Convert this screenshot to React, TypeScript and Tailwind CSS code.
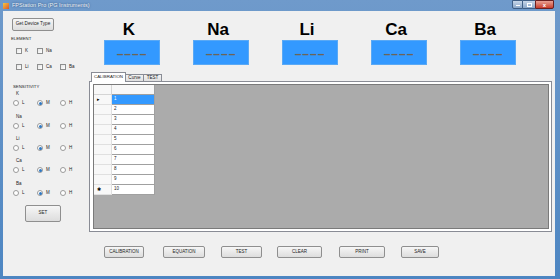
import React from "react";

const elements = ["K", "Na", "Li", "Ca", "Ba"];

const sensitivity = [
  { name: "K", mt: "mt-[1px]" },
  { name: "Na", mt: "mt-[8px]" },
  { name: "Li", mt: "mt-[7px]" },
  { name: "Ca", mt: "mt-[7px]" },
  { name: "Ba", mt: "mt-[8px]" },
];

const bottomButtons = [
  { label: "CALIBRATION", cls: "ml-[16px] w-[40px]" },
  { label: "EQUATION", cls: "ml-[19px] w-[42px]" },
  { label: "TEST", cls: "ml-[16px] w-[41px]" },
  { label: "CLEAR", cls: "ml-[15px] w-[45px]" },
  { label: "PRINT", cls: "ml-[17px] w-[46px]" },
  { label: "SAVE", cls: "ml-[16px] w-[38px]" },
];

function WinButton({ label, cls }: { label: string; cls: string }) {
  return (
    <div
      className={`${cls} flex items-center justify-center rounded-[2px] border border-[#8f8f8f] bg-gradient-to-b from-[#f6f6f6] to-[#dddddd] text-[4.5px] leading-none text-[#222]`}
    >
      {label}
    </div>
  );
}

function CheckBox({ label, w }: { label: string; w: string }) {
  return (
    <div className={`${w} flex items-center`}>
      <div className="h-[6px] w-[6px] border border-[#8e8f8f] bg-gradient-to-br from-[#e6e6e6] to-white" />
      <span className="ml-[3px] text-[4.5px] leading-none text-[#222]">{label}</span>
    </div>
  );
}

function Radio({ label, checked, w }: { label: string; checked?: boolean; w: string }) {
  return (
    <div className={`${w} flex items-center`}>
      <div className="flex h-[6px] w-[6px] items-center justify-center rounded-full border border-[#9a9a9a] bg-white">
        {checked && <div className="h-[3px] w-[3px] rounded-full bg-[#2f78c2]" />}
      </div>
      <span className="ml-[3px] text-[4.5px] leading-none text-[#222]">{label}</span>
    </div>
  );
}

export default function App() {
  const rows = [1, 2, 3, 4, 5, 6, 7, 8, 9, 10];
  return (
    <div className="flex h-[279px] w-[560px] flex-col overflow-hidden bg-gradient-to-b from-[#6f9acb] to-[#4d86c2] font-['Liberation_Sans',Arial,sans-serif]">
      {/* title bar */}
      <div className="flex h-[11px] items-center">
        <div className="ml-[3px] h-[6px] w-[6px] bg-gradient-to-br from-[#f5c542] to-[#d9552a]" />
        <span className="ml-[3px] text-[5.5px] leading-none text-[#eef3f9] [text-shadow:0_0_2px_#1f3f66]">
          FPStation Pro (PG Instruments)
        </span>
        <div className="ml-auto mr-[6px] flex h-[9px] self-start">
          <div className="flex w-[11px] items-end justify-center rounded-bl-[2px] border border-[#3f5f86] bg-gradient-to-b from-[#c9d8ea] to-[#8aa7c9] pb-[2px]">
            <div className="h-[1px] w-[4px] bg-white" />
          </div>
          <div className="flex w-[12px] items-center justify-center border-y border-[#3f5f86] bg-gradient-to-b from-[#c9d8ea] to-[#8aa7c9]">
            <div className="h-[4px] w-[5px] border border-white" />
          </div>
          <div className="flex w-[19px] items-center justify-center rounded-br-[2px] border border-[#6b2020] bg-gradient-to-b from-[#e8a093] to-[#c7392a] text-[6px] font-bold leading-none text-white">
            x
          </div>
        </div>
      </div>

      {/* client area */}
      <div className="ml-[3px] mr-[5px] mb-[3px] flex flex-1 bg-[#f0f0f0]">
        {/* left panel */}
        <div className="flex w-[85px] flex-col">
          <WinButton label="Get Device Type" cls="ml-[9px] mt-[7px] h-[13px] w-[42px] !text-[4.7px]" />

          <div className="ml-[8px] mt-[5px] h-[6px] text-[4.3px] leading-[6px] text-[#222]">ELEMENT</div>
          <div className="ml-[13px] mt-[6px] flex h-[6px]">
            <CheckBox label="K" w="w-[21px]" />
            <CheckBox label="Na" w="w-[23px]" />
          </div>
          <div className="ml-[13px] mt-[10px] flex h-[6px]">
            <CheckBox label="Li" w="w-[21px]" />
            <CheckBox label="Ca" w="w-[23px]" />
            <CheckBox label="Ba" w="w-[23px]" />
          </div>

          <div className="ml-[10px] mt-[14px] h-[6px] text-[4.3px] leading-[6px] text-[#222]">SENSITIVITY</div>
          {sensitivity.map((s) => (
            <div key={s.name} className={`${s.mt} flex flex-col`}>
              <div className="ml-[13px] h-[6px] text-[4.5px] leading-[6px] text-[#222]">{s.name}</div>
              <div className="ml-[10px] mt-[3px] flex h-[6px]">
                <Radio label="L" w="w-[24px]" />
                <Radio label="M" checked w="w-[23px]" />
                <Radio label="H" w="w-[23px]" />
              </div>
            </div>
          ))}

          <WinButton label="SET" cls="ml-[22px] mt-[9px] h-[17px] w-[36px]" />
        </div>

        {/* right area */}
        <div className="flex flex-1 flex-col">
          <div className="mt-[10px] flex gap-[33px] pl-[16px]">
            {elements.map((e) => (
              <div key={e} className="flex w-[56px] flex-col items-center">
                <div className="h-[17px] pr-[6px] text-[17px] font-bold leading-[17px] text-black">{e}</div>
                <div className="mt-[2px] flex h-[25px] w-[56px] items-center justify-center border border-[#5aa9f5] bg-[#3399ff]">
                  <span className="mt-[2px] text-[12px] font-bold leading-none tracking-[1px] text-[#6e6456]">––––</span>
                </div>
              </div>
            ))}
          </div>

          {/* tabs */}
          <div className="relative z-10 -mb-px mt-[7px] flex items-end pl-[3px]">
            <div className="flex h-[10px] w-[35px] items-center justify-center border border-b-0 border-[#898c95] bg-white text-[4.4px] leading-none text-[#222]">
              CALIBRATION
            </div>
            <div className="flex h-[8px] w-[18px] items-center justify-center border border-l-0 border-[#898c95] bg-gradient-to-b from-[#f2f2f2] to-[#e0e0e0] text-[4.6px] leading-none text-[#222]">
              Curve
            </div>
            <div className="flex h-[8px] w-[18px] items-center justify-center border border-l-0 border-[#898c95] bg-gradient-to-b from-[#f2f2f2] to-[#e0e0e0] text-[4.6px] leading-none text-[#222]">
              TEST
            </div>
          </div>

          <div className="ml-[1px] flex h-[151px] w-[463px] border border-[#898c95] bg-white p-[2px] pl-[3px]">
            <div className="flex flex-1 flex-col items-start border border-[#7a7a7a] bg-[#ababab]">
              <div className="flex h-[10px]">
                <div className="w-[18px] border-b border-r border-[#d5d5d5] bg-[#f8f8f8]" />
                <div className="w-[43px] border-b border-r border-[#a0a0a0] bg-[#f8f8f8]" />
              </div>
              {rows.map((r) => (
                <div key={r} className="flex h-[10px]">
                  <div className="flex w-[18px] items-center border-b border-r border-[#e0e0e0] bg-[#f8f8f8] pl-[3px] text-[5px] leading-none text-black">
                    {r === 1 ? "▸" : r === 10 ? "✱" : ""}
                  </div>
                  <div
                    className={`flex w-[43px] items-center border-b border-r border-[#a0a0a0] pl-[2px] text-[4.5px] leading-none ${
                      r === 1 ? "bg-[#3399ff] text-white" : "bg-white text-[#222]"
                    }`}
                  >
                    {r}
                  </div>
                </div>
              ))}
            </div>
          </div>

          <div className="mt-[14px] flex h-[12px]">
            {bottomButtons.map((b) => (
              <WinButton key={b.label} label={b.label} cls={b.cls} />
            ))}
          </div>
        </div>
      </div>
    </div>
  );
}
